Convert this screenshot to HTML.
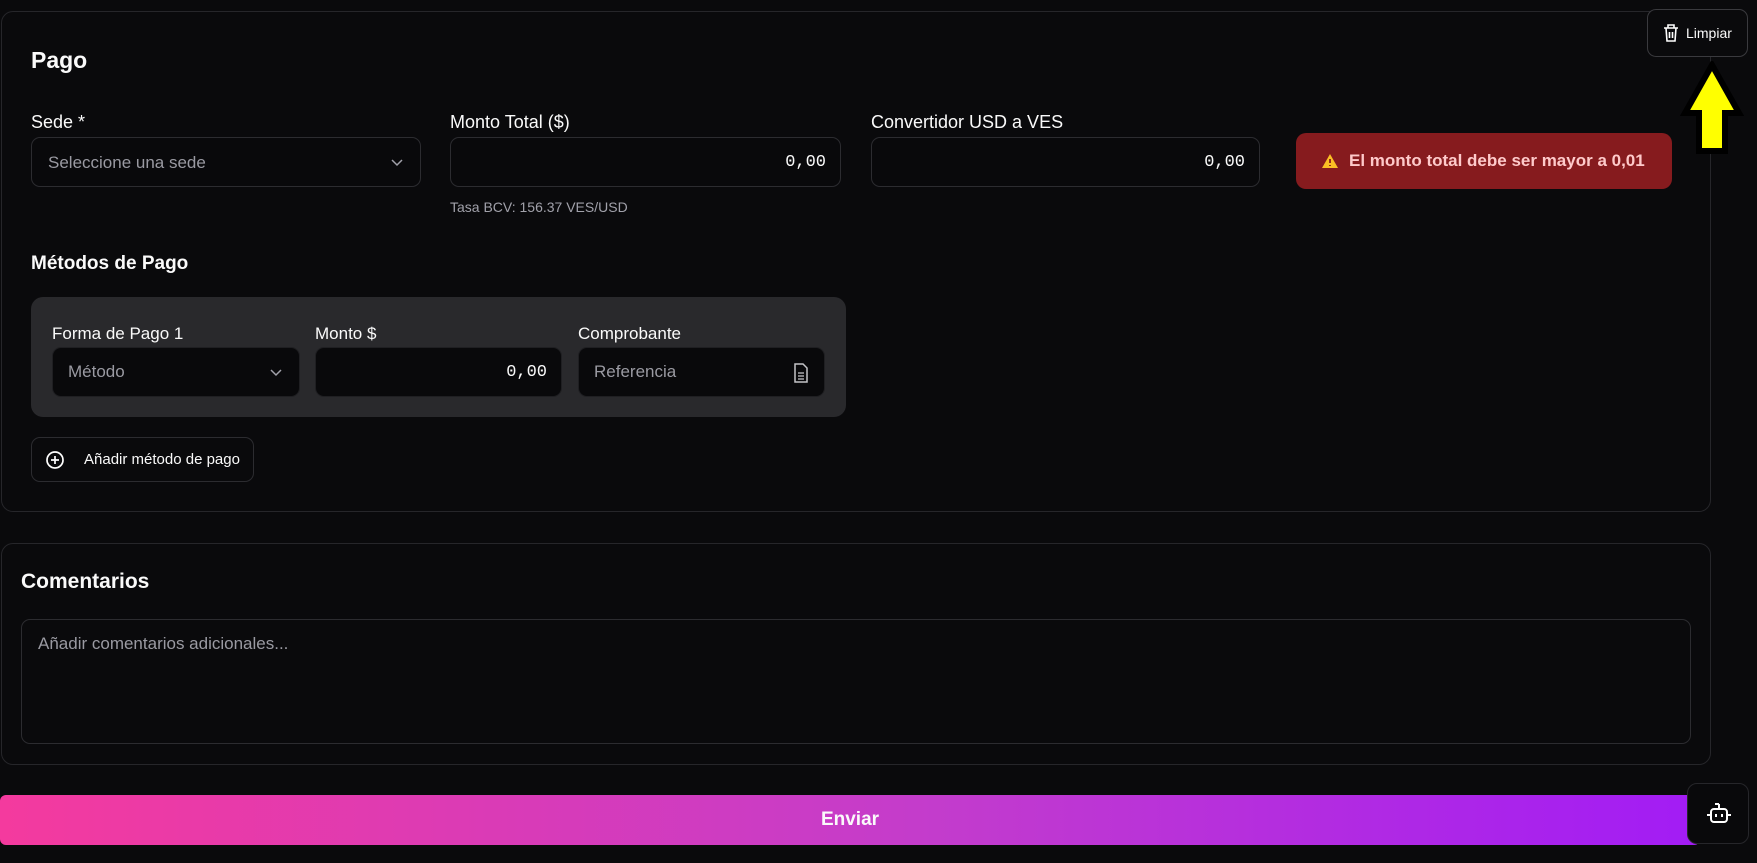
<!DOCTYPE html>
<html><head><meta charset="utf-8"><style>
*{box-sizing:border-box;margin:0;padding:0}
body{width:1757px;height:863px;background:#0a0a0c;font-family:"Liberation Sans",sans-serif;color:#fafafa;position:relative;overflow:hidden}
.abs{position:absolute}
.card{position:absolute;border:1px solid #26262a;border-radius:12px}
.lbl{position:absolute;font-size:18px;color:#fafafa}
.inp{position:absolute;border:1px solid #2c2c30;border-radius:9px;background:#09090b;height:50px}
.ph{color:#9a9aa2;font-size:17px;position:absolute;top:15px}
.num{font-family:"Liberation Mono",monospace;font-size:17px;position:absolute;right:14px;top:15px;color:#fafafa}
</style></head><body>
<div class="card" style="left:1px;top:11px;width:1710px;height:501px"></div>
<div class="abs" style="left:31px;top:47px;font-size:23px;font-weight:bold">Pago</div>
<div class="lbl" style="left:31px;top:112px">Sede *</div>
<div class="lbl" style="left:450px;top:112px">Monto Total ($)</div>
<div class="lbl" style="left:871px;top:112px">Convertidor USD a VES</div>
<div class="inp" style="left:31px;top:137px;width:390px"><span class="ph" style="left:16px">Seleccione una sede</span>
<svg class="abs" style="right:16px;top:19px" width="14" height="10" viewBox="0 0 14 10"><path d="M2 3l5 5 5-5" fill="none" stroke="#a1a1aa" stroke-width="1.5"/></svg></div>
<div class="inp" style="left:450px;top:137px;width:391px"><span class="num">0,00</span></div>
<div class="inp" style="left:871px;top:137px;width:389px"><span class="num">0,00</span></div>
<div class="abs" style="left:450px;top:199px;font-size:14px;color:#a1a1aa">Tasa BCV: 156.37 VES/USD</div>
<div class="abs" style="left:1296px;top:133px;width:376px;height:56px;background:#861b1e;border-radius:10px;color:#fecaca;font-weight:bold;font-size:17px;display:flex;align-items:center;padding-left:25px">
<svg width="18" height="16" viewBox="0 0 18 16" style="margin-right:10px"><path d="M9 1L17 15H1Z" fill="#fbbf24"/><path d="M9 6v4M9 12v1" stroke="#861b1e" stroke-width="1.8"/></svg>El monto total debe ser mayor a 0,01</div>
<div class="abs" style="left:31px;top:253px;font-size:19px;font-weight:bold">Métodos de Pago</div>
<div class="abs" style="left:31px;top:297px;width:815px;height:120px;background:#29292c;border-radius:12px"></div>
<div class="lbl" style="left:52px;top:324px;font-size:17px">Forma de Pago 1</div>
<div class="lbl" style="left:315px;top:324px;font-size:17px">Monto $</div>
<div class="lbl" style="left:578px;top:324px;font-size:17px">Comprobante</div>
<div class="inp" style="left:52px;top:347px;width:248px;border-color:#1f1f22"><span class="ph" style="left:15px;top:14px">Método</span>
<svg class="abs" style="right:16px;top:19px" width="14" height="10" viewBox="0 0 14 10"><path d="M2 3l5 5 5-5" fill="none" stroke="#a1a1aa" stroke-width="1.5"/></svg></div>
<div class="inp" style="left:315px;top:347px;width:247px;border-color:#1f1f22"><span class="num">0,00</span></div>
<div class="inp" style="left:578px;top:347px;width:247px;border-color:#1f1f22"><span class="ph" style="left:15px;top:14px">Referencia</span>
<svg class="abs" style="right:15px;top:15px" width="16" height="20" viewBox="0 0 16 20"><path d="M2 1h8l4 4v14H2z" fill="none" stroke="#c4c4c8" stroke-width="1.5"/><path d="M5 10h6M5 13h6M5 16h6" stroke="#c4c4c8" stroke-width="1.3"/></svg></div>
<div class="abs" style="left:31px;top:437px;width:223px;height:45px;border:1px solid #2c2c30;border-radius:9px;font-size:15px;display:flex;align-items:center;padding-left:13px">
<svg width="20" height="20" viewBox="0 0 20 20" style="margin-right:19px"><circle cx="10" cy="10" r="8" fill="none" stroke="#fff" stroke-width="1.7"/><path d="M10 6v8M6 10h8" stroke="#fff" stroke-width="1.7"/></svg>Añadir método de pago</div>

<div class="card" style="left:1px;top:543px;width:1710px;height:222px"></div>
<div class="abs" style="left:21px;top:570px;font-size:21px;font-weight:bold">Comentarios</div>
<div class="abs" style="left:21px;top:619px;width:1670px;height:125px;border:1px solid #2c2c30;border-radius:9px"><span class="ph" style="left:16px;top:14px">Añadir comentarios adicionales...</span></div>

<div class="abs" style="left:0;top:795px;width:1700px;height:50px;border-radius:6px;background:linear-gradient(90deg,#f43a9e,#c33ccc 55%,#a21cf5);display:flex;align-items:center;justify-content:center;font-size:19px;font-weight:bold">Enviar</div>
<div class="abs" style="left:1687px;top:783px;width:62px;height:61px;background:#09090b;border:1px solid #26262a;border-radius:10px">
<svg class="abs" style="left:16px;top:16px" width="30" height="28" viewBox="0 0 30 28"><path d="M15 4v5M11 4h4" stroke="#fff" stroke-width="2" fill="none"/><rect x="7" y="9" width="16" height="13" rx="3" fill="none" stroke="#fff" stroke-width="2"/><path d="M3 15h4M23 15h4M12 14v3M18 14v3" stroke="#fff" stroke-width="2"/></svg></div>

<div class="abs" style="left:1647px;top:9px;width:101px;height:48px;border:1px solid #3a3a3e;border-radius:9px;background:#0a0a0c;display:flex;align-items:center;padding-left:14px;font-size:14px">
<svg width="18" height="20" viewBox="0 0 18 20" style="margin-right:6px"><path d="M2 5h14M6 5V2h6v3M4 5l1 13h8l1-13M7.5 9v6M10.5 9v6" fill="none" stroke="#fff" stroke-width="1.6"/></svg>Limpiar</div>
<svg class="abs" style="left:1680px;top:61px" width="64" height="94" viewBox="0 0 64 94"><path d="M32 4L59 52H45V90H19V52H5Z" fill="#ffff00" stroke="#000" stroke-width="6" stroke-linejoin="miter"/></svg>
</body></html>
